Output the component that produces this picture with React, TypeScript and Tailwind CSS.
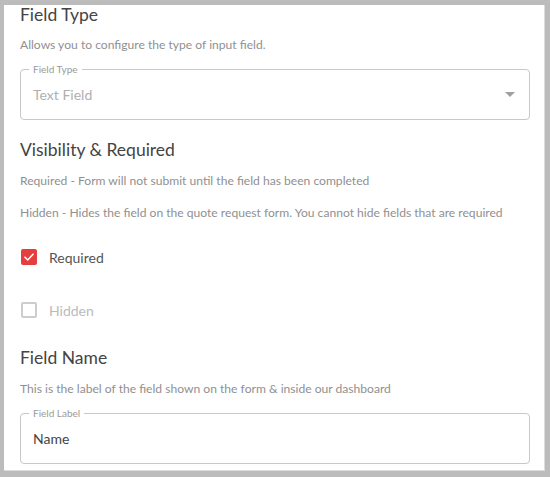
import React from "react";

function OutlinedField({ label, value, valueClass, select }: { label: string; value: string; valueClass: string; select?: boolean }) {
  return (
    <div className="relative h-[51px] rounded-[4px] border border-[#c8c8c8] flex items-center pl-[12px] pr-[12px]">
      <span className="absolute -top-[7px] left-[8px] bg-white px-[4px] text-[10px] leading-[12px] text-[#9a9a9a]">{label}</span>
      <span className={`flex-1 text-[14px] leading-[18px] ${valueClass}`}>{value}</span>
      {select && (
        <svg width="10" height="5" viewBox="0 0 10 5" className="mr-[2px]">
          <path d="M0 0 L10 0 L5 5 Z" fill="#a0a0a0" />
        </svg>
      )}
    </div>
  );
}

function CheckRow({ checked, label }: { checked: boolean; label: string }) {
  return (
    <div className="h-[42px] flex items-center">
      <div className="w-[42px] h-[42px] flex items-center justify-start pl-[1px]">
        {checked ? (
          <div className="w-[16px] h-[16px] rounded-[2px] bg-[#e53e3e] flex items-center justify-center">
            <svg width="12" height="12" viewBox="0 0 24 24">
              <path d="M4 12.5 L9.5 18 L20 6.5" stroke="white" strokeWidth="3" fill="none" strokeLinecap="square" />
            </svg>
          </div>
        ) : (
          <div className="w-[16px] h-[16px] rounded-[2px] border-2 border-[#cdcdcd]" />
        )}
      </div>
      <span className={`text-[14px] -ml-[13px] ${checked ? "text-[#555]" : "text-[#bbbbbb]"}`}>{label}</span>
    </div>
  );
}

export default function App() {
  return (
    <div className="w-[550px] h-[477px] bg-[#bcbcbc] pt-[5px] pl-[4px] pr-[4px] overflow-hidden" style={{ fontFamily: "Lato, 'Noto Sans', sans-serif" }}>
      <div className="w-[541px] h-[466px] bg-white border-r border-b border-[#dcdcdc] overflow-hidden pl-[16px] pr-[14px] flex flex-col">
        <h2 className="h-[20px] leading-[20px] text-[17.5px] text-[#444]">Field Type</h2>
        <p className="mt-[12px] h-[16px] leading-[16px] text-[12.1px] text-[#909090]">Allows you to configure the type of input field.</p>
        <div className="mt-[16px]">
          <OutlinedField label="Field Type" value="Text Field" valueClass="text-[#b0b0b0]" select />
        </div>
        <h2 className="mt-[20px] h-[20px] leading-[20px] text-[17.5px] text-[#444]">Visibility &amp; Required</h2>
        <p className="mt-[13px] h-[16px] leading-[16px] text-[12.1px] text-[#909090]">Required - Form will not submit until the field has been completed</p>
        <p className="mt-[16px] h-[16px] leading-[16px] text-[12.1px] text-[#909090]">Hidden - Hides the field on the quote request form. You cannot hide fields that are required</p>
        <div className="mt-[15px]">
          <CheckRow checked label="Required" />
        </div>
        <div className="mt-[11px]">
          <CheckRow checked={false} label="Hidden" />
        </div>
        <h2 className="mt-[17px] h-[20px] leading-[20px] text-[17.5px] text-[#444]">Field Name</h2>
        <p className="mt-[13px] h-[16px] leading-[16px] text-[12.1px] text-[#909090]">This is the label of the field shown on the form &amp; inside our dashboard</p>
        <div className="mt-[16px]">
          <OutlinedField label="Field Label" value="Name" valueClass="text-[#444]" />
        </div>
      </div>
    </div>
  );
}
